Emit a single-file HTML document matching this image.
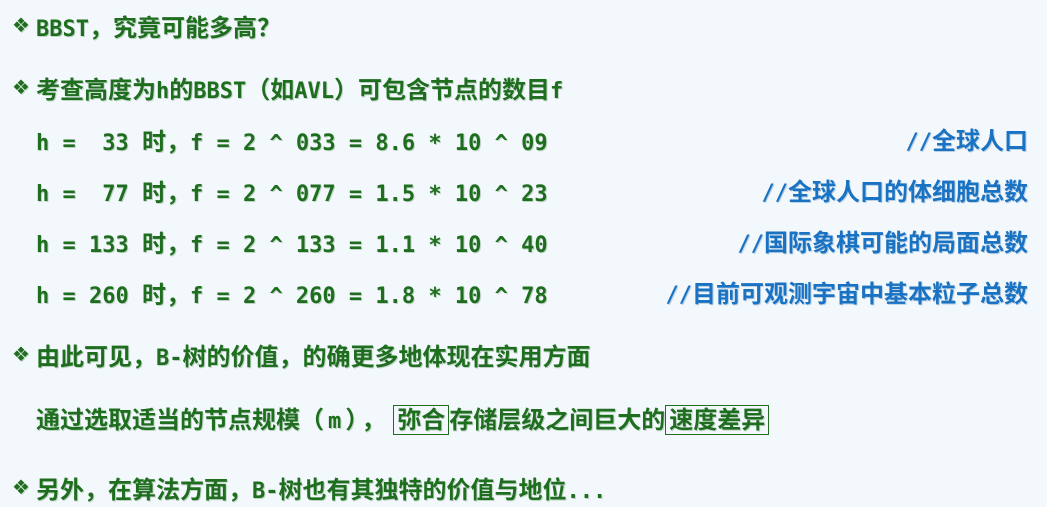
<!DOCTYPE html>
<html><head><meta charset="utf-8"><style>
html,body{margin:0;padding:0;}
body{width:1047px;height:506px;background:#f3f8fc;position:relative;overflow:hidden;
font-family:"DejaVu Sans Mono","Noto Sans CJK SC",monospace;font-weight:bold;font-size:24px;color:#1f6e1f;}
.m{font-size:22px;}
.l{position:absolute;white-space:pre;line-height:30px;text-shadow:1px 1px 0 rgba(30,100,30,0.25);}
.bu{display:inline-block;width:24px;font-family:"Liberation Mono","DejaVu Sans",monospace;font-size:20px;vertical-align:top;line-height:30px;}
.c{position:absolute;right:19px;color:#1a72c2;white-space:pre;line-height:30px;text-shadow:1px 1px 0 rgba(20,90,160,0.25);}
.box{border:1.5px solid #1f6e1f;padding:0 3px;}
</style></head><body>
<div class="l" style="left:12px;top:13px"><span class="bu">❖</span><span class="m">BBST</span>，究竟可能多高？</div>
<div class="l" style="left:12px;top:75px"><span class="bu">❖</span>考查高度为<span class="m">h</span>的<span class="m">BBST</span>（如<span class="m">AVL</span>）可包含节点的数目<span class="m">f</span></div>
<div class="l" style="left:36px;top:127px"><span class="m">h =  33 </span>时，<span class="m">f = 2 ^ 033 = 8.6 * 10 ^ 09</span></div>
<div class="l" style="left:36px;top:178px"><span class="m">h =  77 </span>时，<span class="m">f = 2 ^ 077 = 1.5 * 10 ^ 23</span></div>
<div class="l" style="left:36px;top:229px"><span class="m">h = 133 </span>时，<span class="m">f = 2 ^ 133 = 1.1 * 10 ^ 40</span></div>
<div class="l" style="left:36px;top:280px"><span class="m">h = 260 </span>时，<span class="m">f = 2 ^ 260 = 1.8 * 10 ^ 78</span></div>
<div class="c" style="top:126px"><span class="m">//</span>全球人口</div>
<div class="c" style="top:177px"><span class="m">//</span>全球人口的体细胞总数</div>
<div class="c" style="top:228px"><span class="m">//</span>国际象棋可能的局面总数</div>
<div class="c" style="top:279px"><span class="m">//</span>目前可观测宇宙中基本粒子总数</div>
<div class="l" style="left:12px;top:342px"><span class="bu">❖</span>由此可见，<span class="m">B-</span>树的价值，的确更多地体现在实用方面</div>
<div class="l" style="left:36px;top:405px">通过选取适当的节点规模<span style="letter-spacing:4px">（<span class="m">m</span>），</span><span class="box" style="margin-left:4px">弥合</span>存储层级之间巨大的<span class="box">速度差异</span></div>
<div class="l" style="left:12px;top:475px"><span class="bu">❖</span>另外，在算法方面，<span class="m">B-</span>树也有其独特的价值与地位<span class="m">...</span></div>
</body></html>
